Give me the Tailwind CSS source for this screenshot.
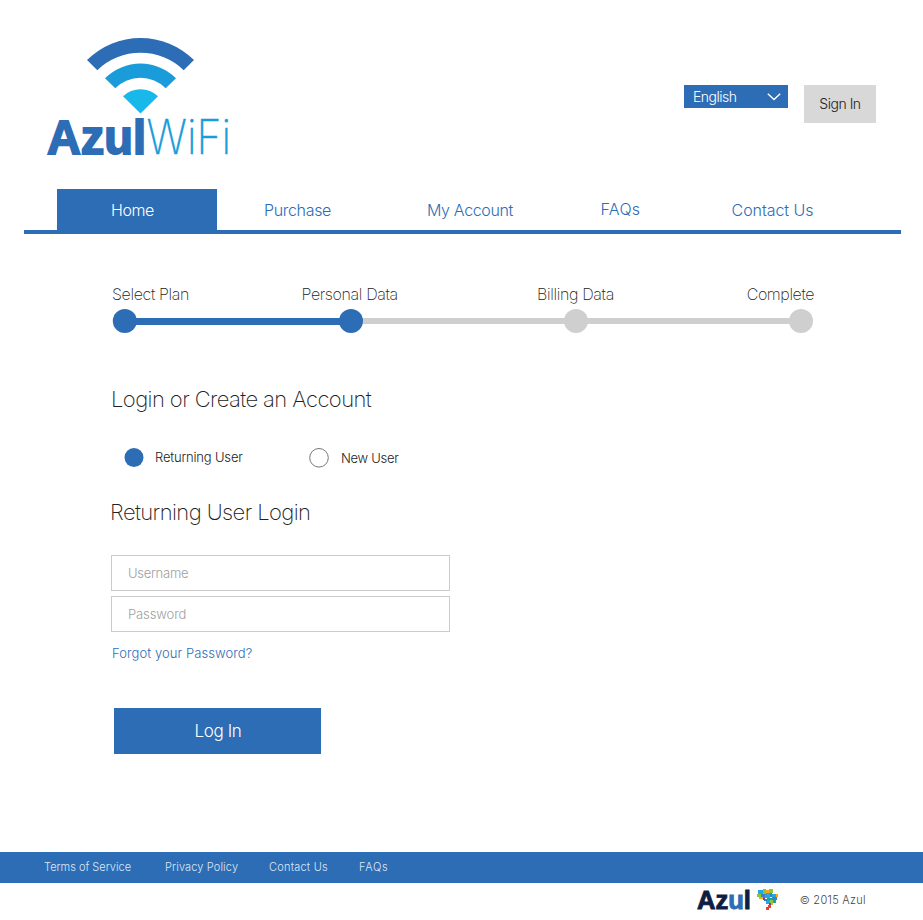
<!DOCTYPE html>
<html lang="en">
<head>
<meta charset="utf-8">
<meta name="viewport" content="width=device-width">
<title>Azul WiFi</title>
<script src="https://cdn.jsdelivr.net/npm/@tailwindcss/browser@4"></script>
</head>
<body class="flex h-[920px] w-[923px] flex-col overflow-hidden bg-white font-['Inter','Liberation_Sans',sans-serif] font-light text-[#222]">

<header class="flex h-[189px] shrink-0 items-start">
  <svg class="ml-10 mt-[30px] shrink-0 overflow-visible" width="200" height="140" viewBox="40 30 200 140" role="img" aria-label="Azul WiFi">
    <path fill="#2d6db6" d="M87 60A76 76 0 0 1 194 60L183.7 70.2A62.5 62.5 0 0 0 97.3 70.2Z"/>
    <path fill="#199cd9" d="M105 78.2A50.5 50.5 0 0 1 176 78.2L165.7 88.2A35.5 35.5 0 0 0 115.3 88.2Z"/>
    <path fill="#18b9ea" d="M123 96.3A25 25 0 0 1 158 96.3L140.5 113.5Z"/>
    <text x="47" y="154" font-family="Liberation Sans" font-weight="700" font-size="49" textLength="99" lengthAdjust="spacingAndGlyphs" fill="#2d6db6" stroke="#2d6db6" stroke-width="2">Azul</text>
    <text x="146.500" y="154.300" font-family="Inter" font-weight="200" font-size="48" textLength="84.500" lengthAdjust="spacingAndGlyphs" fill="#199cd9" stroke="#199cd9" stroke-width=".3">WiFi</text>
  </svg>
  <button class="ml-[444px] mt-[85px] flex h-[23px] w-[104px] items-center justify-between bg-[#2d6db5] pl-[9px] pr-[7px] text-sm font-light tracking-[-0.5px] text-white">
    <span>English</span>
    <svg width="14" height="8" viewBox="0 0 14 8" fill="none" stroke="#fff" stroke-width="1.400"><path d="M.8 .8L7 6.600L13.200 .8"/></svg>
  </button>
  <button class="ml-4 mt-[85px] h-[38px] w-[72px] bg-[#d8d8d8] pb-px text-sm font-light tracking-[-0.48px]">Sign In</button>
</header>

<nav class="mx-[24px] mr-[22px] flex h-[45px] shrink-0 border-b-4 border-[#2d6db5] pl-[33px] text-base leading-[43px] text-[#2d6db5]">
  <a class="w-40 bg-[#2d6db5] pr-[9px] text-center tracking-[-0.43px] text-white">Home</a>
  <a class="w-[161px] text-center tracking-[-0.31px]">Purchase</a>
  <a class="w-[184px] text-center tracking-[-0.36px]">My Account</a>
  <a class="w-[117px] text-center leading-[41px] tracking-[0.3px]">FAQs</a>
  <a class="w-[187px] text-center tracking-[-0.06px]">Contact Us</a>
</nav>

<main class="flex grow flex-col pl-[111px]">
  <section class="mt-[48px] w-[704px]">
    <div class="flex h-6 justify-between pl-px pr-px text-base font-[250] leading-6">
      <span class="w-[189.5px] tracking-[-0.36px]">Select Plan</span>
      <span class="w-[235.5px] tracking-[-0.37px]">Personal Data</span>
      <span class="grow tracking-[-0.35px]">Billing Data</span>
      <span class="tracking-[-0.41px]">Complete</span>
    </div>
    <svg class="mt-[3px] block" width="704" height="24" viewBox="0 0 704 24">
      <path d="M240 12H690" stroke="#cfcfcf" stroke-width="6"/>
      <path d="M13.500 12.500H240" stroke="#2d6db5" stroke-width="7"/>
      <circle cx="13.800" cy="12" r="12" fill="#2d6db5"/><circle cx="240" cy="12" r="12" fill="#2d6db5"/>
      <circle cx="465" cy="12" r="12" fill="#cfcfcf"/><circle cx="690" cy="12" r="12" fill="#cfcfcf"/>
    </svg>
  </section>

  <h1 class="mt-[50px] h-8 text-[22px] font-[250] leading-8 tracking-[-0.58px]">Login or Create an Account</h1>

  <div class="mt-8 flex h-5 items-center text-[13px] leading-5">
    <label class="flex w-[185px] items-center pl-[13px] tracking-[-0.18px]"><svg class="mr-[11px]" width="20" height="20"><circle cx="10" cy="10.500" r="9.500" fill="#2d6db5"/></svg>Returning User</label>
    <label class="flex items-center pl-[13px] tracking-[-0.3px]"><svg class="mr-3 overflow-visible" width="20" height="20"><circle cx="10" cy="10.800" r="9.300" fill="none" stroke="#777"/></svg><span class="pt-px">New User</span></label>
  </div>

  <h2 class="-ml-px mt-[29px] h-8 text-[22px] font-[250] leading-8 tracking-[-0.59px]">Returning User Login</h2>

  <form class="mt-[27px] flex w-[339px] flex-col">
    <input class="h-9 border border-[#ccc] px-4 text-[13px] tracking-[-0.25px] placeholder:text-[#a0a0a0]" placeholder="Username">
    <input class="mt-[5px] h-9 border border-[#ccc] px-4 text-[13px] tracking-[-0.1px] placeholder:text-[#a0a0a0]" placeholder="Password" type="password">
    <a class="mt-[11px] pl-px text-[13px] font-[350] leading-5 tracking-[0.08px] text-[#2d6db5]">Forgot your Password?</a>
    <button type="button" class="ml-[3px] mt-[45px] h-[46px] w-[207px] bg-[#2d6db5] pl-px pt-px text-[17px] font-light tracking-[-0.4px] text-white">Log In</button>
  </form>
</main>

<footer class="shrink-0">
  <div class="flex h-[31px] bg-[#2d6db5] pl-11 text-[11px] leading-[30px] text-[#dce8f5]">
    <a class="w-[121px]">Terms of Service</a>
    <a class="w-[104px] tracking-[0.13px]">Privacy Policy</a>
    <a class="w-[90px] tracking-[0.22px]">Contact Us</a>
    <a class="tracking-[0.7px]">FAQs</a>
  </div>
  <div class="flex h-[37px] items-start justify-end pr-[57px]">
    <svg class="mt-[3px]" width="90" height="30" viewBox="694 886 90 30" role="img" aria-label="Azul">
      <text x="697" y="909" font-family="Liberation Sans" font-weight="700" font-size="25" textLength="54" lengthAdjust="spacingAndGlyphs" fill="#101d41" stroke-width=".9" stroke="#101d41">Az<tspan fill="#2d6db5" stroke="#2d6db5">u</tspan>l</text>
      <g>
        <path fill="#25a7df" d="M758 890h5v4h-5zM765 893h5v5h-5zM772 894h4v3h-4zM766 900h4v4h-4z"/>
        <path fill="#8cc63f" d="M763 889h3v5h-3zM769 889h4v4h-4zM757 894h4v3h-4zM770 900h3v3h-3z"/>
        <path fill="#3d7fc4" d="M761 894h4v4h-4zM770 893h2v4h-2zM772 897h5v3h-5zM764 899h3v2h-3z"/>
        <path fill="#f7a81b" d="M766 890h3v3h-3zM759 897h4v2h-4zM776 894h2v3h-2zM770 903h3v2h-3z"/>
        <path fill="#12a79d" d="M767 898h5v2h-5zM773 900h3v3h-3z"/>
        <path fill="#7b3f98" d="M763 898h2v2h-2zM769 903h2v2h-2z"/>
        <path fill="#e9402f" d="M768 905h3v3h-3zM766 907h3v3h-3z"/>
      </g>
    </svg>
    <span class="ml-4 mt-[9px] text-[11px] leading-4 tracking-[0.3px] text-[#444]">© 2015 Azul</span>
  </div>
</footer>
</body>
</html>
